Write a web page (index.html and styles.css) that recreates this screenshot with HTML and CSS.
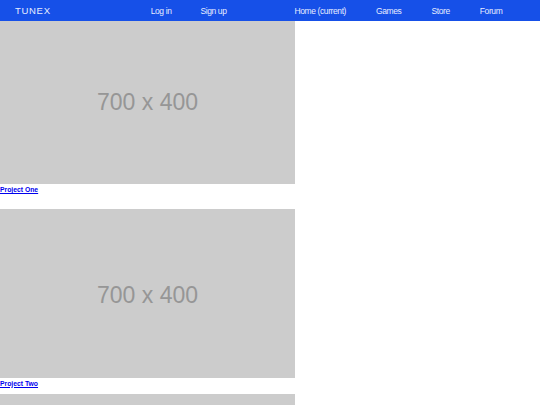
FILE: index.html
```html
<!DOCTYPE html>
<html>
<head>
<meta charset="utf-8">
<link rel="stylesheet" href="styles.css">
</head>
<body>
<nav class="navbar">
  <a class="brand" href="#">TUNEX</a>
  <div class="nav-group nav-auth">
    <a class="nav-link" href="#">Log in</a>
    <a class="nav-link" href="#">Sign up</a>
  </div>
  <div class="nav-group nav-main">
    <a class="nav-link" href="#">Home (current)</a>
    <a class="nav-link" href="#">Games</a>
    <a class="nav-link" href="#">Store</a>
    <a class="nav-link" href="#">Forum</a>
  </div>
</nav>
<main class="projects">
  <div class="project project-first">
    <div class="placeholder">700 x 400</div>
    <a class="caption" href="#">Project One</a>
  </div>
  <div class="project">
    <div class="placeholder">700 x 400</div>
    <a class="caption" href="#">Project Two</a>
  </div>
  <div class="project">
    <div class="placeholder">700 x 400</div>
    <a class="caption" href="#">Project Three</a>
  </div>
</main>
</body>
</html>
```
FILE: styles.css
```css
html, body {
  margin: 0;
  padding: 0;
  background: #ffffff;
  font-family: "Liberation Sans", Arial, sans-serif;
}
.navbar {
  position: fixed;
  top: 0;
  left: 0;
  right: 0;
  height: 21px;
  background: #1650e8;
  display: flex;
  align-items: center;
  z-index: 10;
}
.brand {
  color: #e6ecff;
  text-decoration: none;
  font-size: 9.5px;
  letter-spacing: 0.7px;
  margin-left: 15px;
}
.nav-group {
  display: flex;
  align-items: center;
}
.nav-auth {
  margin-left: 100px;
  gap: 29px;
}
.nav-main {
  margin-left: 68px;
  gap: 30px;
}
.nav-link {
  color: #e6ecff;
  text-decoration: none;
  font-size: 8.5px;
  letter-spacing: -0.4px;
}
.projects {
  padding-top: 15.4px;
  width: 295px;
}
.project {
  display: flex;
  flex-direction: column;
  align-items: flex-start;
  padding-bottom: 7.8px;
}
.project-first {
  padding-bottom: 16px;
}
.placeholder {
  width: 295px;
  aspect-ratio: 700 / 400;
  background: #cccccc;
  color: #969696;
  font-size: 23px;
  padding-top: 5px;
  box-sizing: border-box;
  display: flex;
  align-items: center;
  justify-content: center;
}
.caption {
  color: #0000ee;
  font-weight: bold;
  font-size: 6.8px;
  line-height: 6px;
  margin-top: 3px;
  text-decoration: underline;
}
```
